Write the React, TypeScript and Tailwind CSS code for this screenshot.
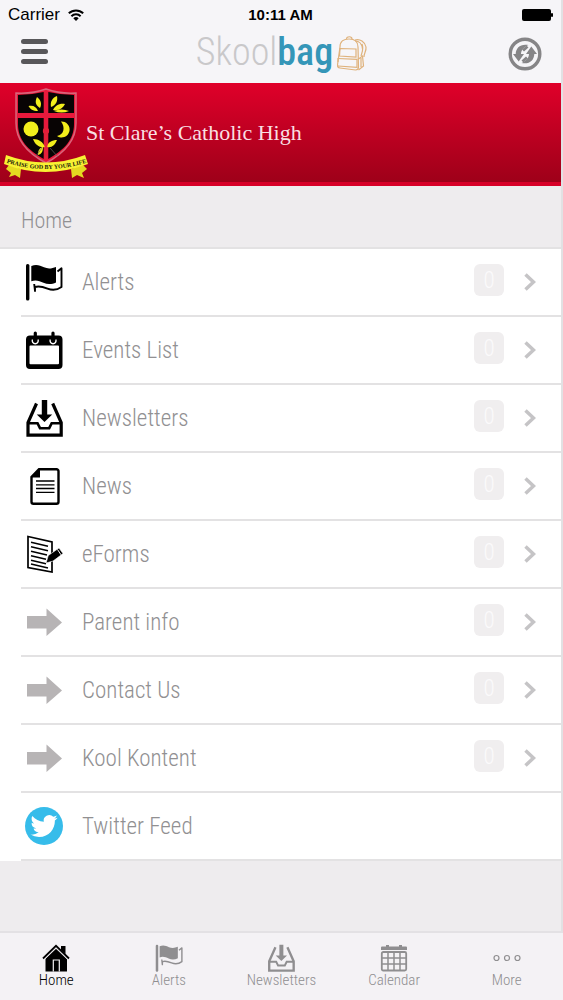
import type { ReactNode } from 'react';

interface MenuItem {
  label: string;
  icon: ReactNode;
  count?: number;
}

interface TabItem {
  label: string;
  icon: ReactNode;
  active?: boolean;
}

function FlagIcon({ className }: { className: string }) {
  return (
    <svg viewBox="0 0 38 38" className={className} fill="currentColor" aria-hidden="true">
      <rect x="1" y="1" width="3.4" height="36.5" rx="1.6" />
      <path d="M6.3 3C11 .8 15 2.2 19 4.3c4 1.8 8 1.2 12-.4v15.6c-4 2-8.500 2.200-12.500.3-4-2-8-3.400-12.200-1.500z" />
      <path
        d="M32.500 8.500 36.500 5.300V24c-4.500 3.200-9 3.600-14 1.600-5-2-8.500-3-12.500-1.600v4l-.8-7"
        fill="none"
        stroke="currentColor"
        strokeWidth="1.9"
        strokeLinejoin="round"
      />
    </svg>
  );
}

function EventsIcon({ className }: { className: string }) {
  return (
    <svg viewBox="0 0 38 38" className={className} aria-hidden="true">
      <path
        fill="currentColor"
        fillRule="evenodd"
        d="M5 4.500h28.500a4 4 0 0 1 4 4V34a4 4 0 0 1-4 4H5a4 4 0 0 1-4-4V8.500a4 4 0 0 1 4-4zM5.500 14.500a1 1 0 0 0-1 1v16.800a1 1 0 0 0 1 1H33a1 1 0 0 0 1-1V15.500a1 1 0 0 0-1-1z"
      />
      <path d="M7.500 8.500a3 3 0 1 0 5.500 0M25.300 8.500a3 3 0 1 0 5.500 0" fill="none" stroke="#fff" strokeWidth="1.4" />
      <path d="M10.300 2v7.500M28 2v7.500" stroke="currentColor" strokeWidth="3.200" strokeLinecap="round" />
    </svg>
  );
}

function InboxIcon({ className }: { className: string }) {
  return (
    <svg viewBox="0 0 38 38" className={className} aria-hidden="true">
      <g fill="none" stroke="currentColor" strokeWidth="3.200">
        <path d="M11.500 4.500 3 23.500v12.600h33.200V23.500L27.700 4.500" />
        <path d="M3 24.200h9.500l2.500 5h9.200l2.500-5h9.500" strokeWidth="2.600" />
      </g>
      <path d="M16.800 1h5.400v14.500h5L19.500 23l-7.700-7.500h5z" fill="currentColor" />
    </svg>
  );
}

function NewsIcon({ className }: { className: string }) {
  return (
    <svg viewBox="0 0 38 38" className={className} aria-hidden="true">
      <path
        d="M14 2.200h17.500a2 2 0 0 1 2 2v30.600a2 2 0 0 1-2 2h-23a2 2 0 0 1-2-2V10z"
        fill="none"
        stroke="currentColor"
        strokeWidth="2.400"
      />
      <path d="M15 1.500V10.500H6z" fill="currentColor" />
      <path d="M11 14h18.500M11 17.800h18.500M11 21.500h18.500M11 25.300h18.500" stroke="currentColor" strokeWidth="1.300" />
    </svg>
  );
}

function FormsIcon({ className }: { className: string }) {
  return (
    <svg viewBox="0 0 38 38" className={className} aria-hidden="true">
      <path d="M3 1.500 27 7v30L3 32.500z" fill="none" stroke="currentColor" strokeWidth="1.700" />
      <path
        d="M6 7.200l17 4M6 11.700l17 4M6 16.200l16 3.800M6 20.700l15 3.600M6 25.200l15 3.600M6 29l17 4"
        stroke="currentColor"
        strokeWidth="1.500"
      />
      <path d="M21 28l2.300-7.500L34 13l4 5.600-10 7.500z" fill="currentColor" stroke="#fff" strokeWidth=".6" />
      <path d="M32.500 14.500l3.500 5.300" stroke="#fff" strokeWidth="1" />
    </svg>
  );
}

function ArrowIcon({ className }: { className: string }) {
  return (
    <svg viewBox="0 0 38 38" className={className} fill="#b7b4b5" aria-hidden="true">
      <path d="M2 13h19.500V5.500L37 19.500 21.500 33v-7.500H2z" />
    </svg>
  );
}

function TwitterIcon({ className }: { className: string }) {
  return (
    <svg viewBox="0 0 38 38" className={className} aria-hidden="true">
      <circle cx="19" cy="19" r="19" fill="#36bcea" />
      <path
        transform="translate(5.500 5.500) scale(1.130)"
        fill="#fff"
        d="M23.953 4.570a10 10 0 0 1-2.825.775 4.958 4.958 0 0 0 2.163-2.723c-.951.555-2.005.959-3.127 1.184a4.920 4.920 0 0 0-8.384 4.482C7.690 8.095 4.067 6.130 1.640 3.162a4.822 4.822 0 0 0-.666 2.475c0 1.710.870 3.213 2.188 4.096a4.904 4.904 0 0 1-2.228-.616v.060a4.923 4.923 0 0 0 3.946 4.827 4.996 4.996 0 0 1-2.212.085 4.936 4.936 0 0 0 4.604 3.417 9.867 9.867 0 0 1-6.102 2.105c-.390 0-.779-.023-1.170-.067a13.995 13.995 0 0 0 7.557 2.209c9.053 0 13.998-7.496 13.998-13.985 0-.210 0-.420-.015-.630A9.935 9.935 0 0 0 24 4.590z"
      />
    </svg>
  );
}

function HouseIcon({ className }: { className: string }) {
  return (
    <svg viewBox="0 0 28 28" className={className} aria-hidden="true">
      <path d="M19 2h4.500v8L19 6z" fill="currentColor" />
      <path d="M14 4.500 3.500 14.500v13H25v-13z" fill="currentColor" />
      <path d="M11.300 27.500V16h6v11.500" fill="none" stroke="#f4f2f5" strokeWidth="1.200" />
      <path d="M1 14.500 14 1.800l13 12.700" fill="none" stroke="currentColor" strokeWidth="1.800" />
      <path d="M2.500 15.500 14 4.300l11.500 11.200" fill="none" stroke="#f4f2f5" strokeWidth=".9" />
    </svg>
  );
}

function CalendarIcon({ className }: { className: string }) {
  return (
    <svg viewBox="0 0 28 28" className={className} aria-hidden="true">
      <path d="M1 6V3.500a1 1 0 0 1 1-1h4V1h3v1.500h10V1h3v1.500h4a1 1 0 0 1 1 1V6z" fill="currentColor" />
      <rect x="1.800" y="8" width="24.400" height="18.500" rx="1.500" fill="none" stroke="currentColor" strokeWidth="1.800" />
      <path d="M1 14h26M1 20h26M8 8v19M14 8v19M20 8v19" stroke="currentColor" strokeWidth="1.500" />
    </svg>
  );
}

function MoreIcon({ className }: { className: string }) {
  return (
    <svg viewBox="0 0 28 28" className={className} fill="none" stroke="currentColor" strokeWidth="1.200" aria-hidden="true">
      <circle cx="3.500" cy="14" r="2.500" />
      <circle cx="14" cy="14" r="2.500" />
      <circle cx="24.500" cy="14" r="2.500" />
    </svg>
  );
}

function BackpackIcon() {
  return (
    <svg viewBox="0 0 30 36" className="h-9 w-[30px]" fill="none" stroke="#dfb27c" strokeWidth="1.200" aria-hidden="true">
      <path d="M3 11C3 5 7 3 12 3s9 2 9 8l.5 20c0 2-1 3-3 3L3 32c-2 0-2.500-1-2.500-3z" />
      <path d="M9.500 3c0-3 5.500-3 5.500 0M3 12.500l16 .5v8L2.500 20zM1 22.500l19 .8v8L1 30" />
      <path d="M1 26v-4M18 4c5-1.500 10 2 11 7 .5 4-2 6-2 10M18 5c5 0 7 3 7.500 8M25 8c2 5 0 8-1 12M21.500 23l4-3 1 10-5 4M24 22v9" />
    </svg>
  );
}

function RefreshIcon() {
  return (
    <svg viewBox="0 0 34 34" className="size-[34px]" aria-hidden="true">
      <circle cx="17" cy="17" r="14.800" fill="none" stroke="#868587" strokeWidth="3.400" />
      <path d="M20.500 8C12.500 6.500 8 10.500 7.700 17H5l5.700 7.500L16 17h-3c.2-4 2.500-7 7.500-9z" fill="#868587" />
      <path d="M13.500 26C21.500 27.500 26 23.500 26.300 17H29l-5.700-7.500L18 17h3c-.2 4-2.500 7-7.500 9z" fill="#868587" />
      <path d="M15 13.500 19.500 9.500M14.500 24.500 19 20.500" stroke="#868587" strokeWidth="3" />
    </svg>
  );
}

function SchoolCrest() {
  return (
    <svg viewBox="0 0 90 103" className="h-[103px] w-[90px] shrink-0" role="img" aria-label="School crest">
      <path
        d="M16 10Q32 11 46 6q14 5 30 4v30c0 19-13 31-30 40-17-9-30-21-30-40z"
        fill="#e8193c"
        stroke="#d9647a"
        strokeWidth="1.500"
      />
      <path d="M18 12q13 0 25.700-3v21H18zM48.300 9q13 3 25.700 3v18H48.300zM18 35h25.700v41C28 67 18 57 18 41zM48.300 35H74v6c0 16-10 26-25.700 35z" fill="#080404" />
      <g fill="#f2ee1c">
        <circle cx="31" cy="46" r="7.500" />
        <path d="M61 38.500a8 8 0 1 1-4 14.500c7-1 8.500-9 4-14.500z" />
        <path d="M40 25c-5-3-5-7-3-11 4 3 5 7 3 11zM38 28c-5 0-8-2-9.500-5 5-1 8 1 9.500 5zM51 24c-1-5 1-9 6-11 1 5-1 9-6 11zM53 27c2-4 6-7 12-6-2 4-6 7-12 6zM54 28c5-2 10-2 15 0-5 2-10 2-15 0z" />
        <path d="M45 64c-5 1-10-2-12-8 6 0 10 3 12 8zM47 64c1-5 5-7 10-7-2 5-5 8-10 7zM43 64c0 4-1 7-5 8 0-4 1-7 5-8z" />
      </g>
      <path d="M46 50v27" stroke="#e02338" strokeWidth="2.500" />
      <circle cx="46" cy="48" r="2.500" fill="none" stroke="#e02338" strokeWidth="1.300" />
      <path d="M50 65l8 9M42 65l-6 8" stroke="#666" strokeWidth=".7" />
      <path d="M9 82l12 4-1 9-5-3-6 2 2-4-5-4zM83 82l-12 4 1 9 5-3 7 3-2-5 5-4z" fill="#e5d921" />
      <path d="M6 72q40 15 79 0l3 9q-43 16-84 0z" fill="#f8f133" />
      <path id="ribbon" d="M6 79.500q40 13 81 0" fill="none" />
      <text fontFamily="Liberation Serif, serif" fontWeight="700" fontSize="6" fill="#20200a">
        <textPath href="#ribbon" startOffset="50%" textAnchor="middle">
          PRAISE GOD BY YOUR LIFE
        </textPath>
      </text>
    </svg>
  );
}

const menuItems: MenuItem[] = [
  { label: 'Alerts', icon: <FlagIcon className="size-[38px]" />, count: 0 },
  { label: 'Events List', icon: <EventsIcon className="size-[38px]" />, count: 0 },
  { label: 'Newsletters', icon: <InboxIcon className="size-[38px]" />, count: 0 },
  { label: 'News', icon: <NewsIcon className="size-[38px]" />, count: 0 },
  { label: 'eForms', icon: <FormsIcon className="size-[38px]" />, count: 0 },
  { label: 'Parent info', icon: <ArrowIcon className="size-[38px]" />, count: 0 },
  { label: 'Contact Us', icon: <ArrowIcon className="size-[38px]" />, count: 0 },
  { label: 'Kool Kontent', icon: <ArrowIcon className="size-[38px]" />, count: 0 },
  { label: 'Twitter Feed', icon: <TwitterIcon className="size-[38px]" /> },
];

const tabs: TabItem[] = [
  { label: 'Home', icon: <HouseIcon className="size-7" />, active: true },
  { label: 'Alerts', icon: <FlagIcon className="size-7" /> },
  { label: 'Newsletters', icon: <InboxIcon className="size-7" /> },
  { label: 'Calendar', icon: <CalendarIcon className="size-7" /> },
  { label: 'More', icon: <MoreIcon className="size-7" /> },
];

function StatusBar() {
  return (
    <div className="grid h-7 grid-cols-3 items-center px-2 pt-0.5 font-['Liberation_Sans',sans-serif] text-black">
      <div className="flex items-center gap-2 text-[17px]">
        <span>Carrier</span>
        <svg viewBox="0 0 16 12" className="h-3 w-4" fill="none" stroke="#000" strokeWidth="2" aria-hidden="true">
          <path d="M.8 4.300a10.500 10.500 0 0 1 14.400 0M3.400 7.200a6.500 6.500 0 0 1 9.200 0" />
          <path d="M8 12 5.300 9.200a4 4 0 0 1 5.400 0z" fill="#000" stroke="none" />
        </svg>
      </div>
      <span className="text-center text-[15px] font-bold">10:11 AM</span>
      <svg viewBox="0 0 34 14" className="h-3.5 w-[34px] justify-self-end" aria-hidden="true">
        <rect x="3" y="1" width="29" height="12" rx="2" fill="#000" />
        <rect x="32" y="5" width="2" height="4" rx="1" fill="#000" />
      </svg>
    </div>
  );
}

function Header() {
  return (
    <header className="bg-[#f6f5f8]">
      <StatusBar />
      <div className="grid h-[55px] grid-cols-[1fr_auto_1fr] items-center pr-[19px] pb-1 pl-[21px]">
        <button type="button" aria-label="Menu" className="mb-1 flex w-[27px] flex-col gap-[5px]">
          <span className="h-[5px] rounded-sm bg-[#58575a]" />
          <span className="h-[5px] rounded-sm bg-[#58575a]" />
          <span className="h-[5px] rounded-sm bg-[#58575a]" />
        </button>
        <div className="flex items-center gap-1">
          <span className="pb-1 text-[38px] leading-none text-[#c9c8ca]">
            Skool<span className="font-medium text-[#3596b8]">bag</span>
          </span>
          <BackpackIcon />
        </div>
        <button type="button" aria-label="Refresh" className="justify-self-end">
          <RefreshIcon />
        </button>
      </div>
    </header>
  );
}

export default function App() {
  return (
    <div className="flex min-h-screen flex-col bg-[#eeecee] font-['Roboto_Condensed','Roboto',sans-serif] font-light">
      <div className="flex-1 border-r-2 border-[#e2e1e3]">
        <Header />

        <div className="flex items-center border-b-4 border-[#d80028] bg-linear-to-b from-[#e0002a] to-[#9e0019]">
          <div className="-mb-1 flex items-center">
            <SchoolCrest />
            <h1 className="-ml-1 pb-1 font-['Liberation_Serif',serif] text-[22px] font-normal text-[#f9dfe2]">
              St Clare’s Catholic High
            </h1>
          </div>
        </div>

        <h2 className="flex h-[63px] items-center border-b-2 border-[#e3e2e3] px-[21px] pt-2 text-[22px] text-[#919092]">Home</h2>

        <main>
          <ul className="bg-white pl-[21px]">
            {menuItems.map((item) => (
              <li key={item.label} className="border-b-2 border-[#e3e2e3]">
                <a href="#" className="flex h-[66px] items-center pr-[25px] pl-1 text-black">
                  {item.icon}
                  <span className="ml-[19px] flex-1 pt-0.5 text-[23px] text-[#919092]">{item.label}</span>
                  {item.count !== undefined && (
                    <>
                      <span className="mb-1 flex h-8 w-[30px] items-center justify-center rounded-md bg-[#f0eeef] pt-0.5 text-[23px] text-[#fbfafb]">
                        {item.count}
                      </span>
                      <svg
                        viewBox="0 0 12 18"
                        className="ml-5 h-[18px] w-3"
                        fill="none"
                        stroke="#c5c4c6"
                        strokeWidth="3.500"
                        aria-hidden="true"
                      >
                        <path d="M1.500 1.500 9.500 9l-8 7.500" />
                      </svg>
                    </>
                  )}
                </a>
              </li>
            ))}
          </ul>
        </main>
      </div>

      <nav className="grid h-[69px] grid-cols-5 border-t-2 border-[#e3e1e4] bg-[#f4f2f5] pt-[11px]">
        {tabs.map((tab) => (
          <a
            key={tab.label}
            href="#"
            className={`flex flex-col items-center text-[15px] leading-4 ${tab.active ? 'text-black' : 'text-[#8f8e90]'}`}
          >
            {tab.icon}
            {tab.label}
          </a>
        ))}
      </nav>
    </div>
  );
}
